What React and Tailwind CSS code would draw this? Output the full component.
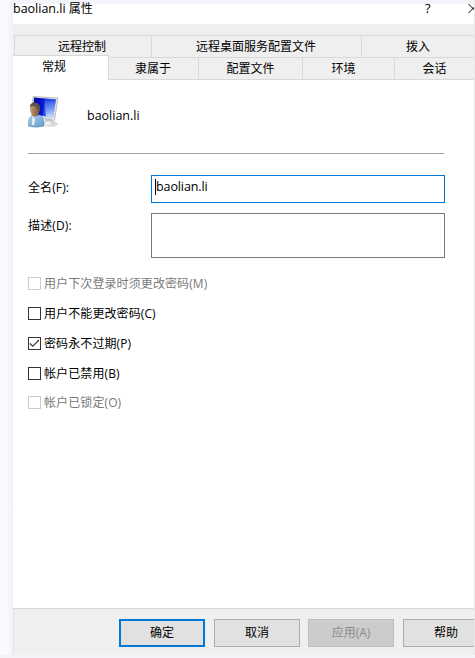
import React from 'react';

function Tab({ className, children }) {
  return <div className={`flex shrink-0 items-center justify-center border-[#d9d9d9] ${className}`}>{children}</div>;
}

function UserIcon() {
  return (
    <svg width="32" height="34" viewBox="0 0 32 34" className="block">
      <defs>
        <linearGradient id="screen" x1="0" y1="0" x2="1" y2="0.1">
          <stop offset="0" stopColor="#0004a0" />
          <stop offset="0.5" stopColor="#0a18d8" />
          <stop offset="0.54" stopColor="#2c55e6" />
          <stop offset="1" stopColor="#4f7cf0" />
        </linearGradient>
        <linearGradient id="glow" x1="0" y1="0" x2="0" y2="1">
          <stop offset="0" stopColor="#0a22d8" stopOpacity="0.8" />
          <stop offset="0.4" stopColor="#7ea6f6" stopOpacity="0.5" />
          <stop offset="1" stopColor="#eef5ff" stopOpacity="0.9" />
        </linearGradient>
        <linearGradient id="shirt" x1="0" y1="0" x2="1" y2="1">
          <stop offset="0" stopColor="#b0d3ee" />
          <stop offset="1" stopColor="#6298c9" />
        </linearGradient>
        <linearGradient id="face" x1="0" y1="0" x2="1" y2="0">
          <stop offset="0" stopColor="#c49a70" />
          <stop offset="1" stopColor="#7d5533" />
        </linearGradient>
      </defs>
      <ellipse cx="22.500" cy="29" rx="7.500" ry="3" fill="#dcdcdc" />
      <path d="M17 23L23 24L26 29L17 31Z" fill="#c3c5c7" />
      <path d="M16 27L22 26L25 29L17 31Z" fill="#eeeeee" />
      <path d="M5 1.500L30 3L26.500 25.500L4 21Z" fill="#e3e4e4" stroke="#b0b2b4" strokeWidth="0.8" />
      <path d="M6 2.500L28 4.500L25 23L5 19Z" fill="url(#screen)" />
      <path d="M16.500 3.500L28 4.500L25 23L18 21.500Z" fill="url(#glow)" />
      <path d="M0 31C0 24 2 21 5.500 20L11 20C15 21 16.500 25 16 31Q8 33.500 0 31Z" fill="url(#shirt)" stroke="#568ab4" strokeWidth="0.5" />
      <path d="M4.500 21L7 24L6 30L4 30Z" fill="#e9f4fa" />
      <path d="M3 16L9 18L10 20Q7 23 4 20Z" fill="#9a6c46" />
      <path d="M2 12Q2 8 6.500 8Q12 9 11.500 15Q11 21 6.500 21Q2 20 2 12Z" fill="url(#face)" />
      <path d="M2 12Q2 7.500 7 7.500Q13 8.500 12 15L10.500 18Q10 13 7.500 11.500Q4 10.500 2 12Z" fill="#59544c" />
    </svg>
  );
}

function Check({ label, checked, disabled, className = '' }) {
  return (
    <div className={`flex h-[30px] items-center ${disabled ? 'text-[#7a7a7a]' : 'text-black'} ${className}`}>
      <span className={`-mt-px mr-[3px] block size-[13px] shrink-0 border bg-white ${disabled ? 'border-[#cccccc]' : 'border-[#333333]'}`}>
        {checked && (
          <svg width="11" height="11" viewBox="0 0 11 11" className="block">
            <path d="M1 5.500L3.800 8.200L10 2" fill="none" stroke="#333" strokeWidth="1.1" />
          </svg>
        )}
      </span>
      <span className="tracking-[0.1px]">{label}</span>
    </div>
  );
}

function Button({ className, children }) {
  return <button className={`flex h-7 w-[86px] shrink-0 items-center justify-center ${className}`}>{children}</button>;
}

export default function App() {
  return (
    <div className="flex h-[658px] w-[475px] flex-col overflow-hidden bg-[#f3f4f9] font-['Open_Sans','Noto_Sans_CJK_SC',sans-serif] text-[12px] leading-[16px] whitespace-nowrap text-black">
      <div className="flex h-[655px] shrink-0">
        <div className="w-[13px] shrink-0 bg-linear-to-r from-[#fafbff] from-50% to-[#f0f0f5]" />
        <div className="flex w-[462px] shrink-0 flex-col overflow-x-clip border-r border-[#e8e8e8] bg-white">
          <header className="flex h-[24px] shrink-0 bg-linear-to-b from-[#f3f4f9] from-[4px] to-white to-[4px]">
            <div className="w-[410px] shrink-0 pt-px"><span className="text-[12.500px]">baolian.li</span> 属性</div>
            <div className="w-[45px] shrink-0 pl-[2px] text-[13px]">?</div>
            <svg width="10" height="14" viewBox="0 0 10 14" className="shrink-0">
              <path d="M0.500 4L9.500 13M9.500 4L0.500 13" stroke="#000" fill="none" />
            </svg>
          </header>
          <nav className="flex h-[56px] shrink-0 flex-col bg-[#efefef] pt-[11px]">
            <div className="flex h-[22px] shrink-0">
              <Tab className="ml-px w-[137px] border-t border-l pr-[2px]">远程控制</Tab>
              <Tab className="w-[210px] border-t border-l pr-px">远程桌面服务配置文件</Tab>
              <Tab className="w-[113px] border-t border-l">拨入</Tab>
            </div>
            <div className="flex h-[23px] shrink-0">
              <Tab className="-mt-[2px] h-[25px] w-[96px] border-t border-r bg-white pr-[13px] pb-[2px]">常规</Tab>
              <Tab className="w-[90px] border-y border-r pr-px">隶属于</Tab>
              <Tab className="w-[104px] border-y border-r">配置文件</Tab>
              <Tab className="w-[92px] border-y border-r pr-[10px]">环境</Tab>
              <Tab className="w-[79px] border-y">会话</Tab>
            </div>
          </nav>
          <main className="flex h-[528px] shrink-0 flex-col pl-[15px]">
            <div className="flex h-[74px] w-[416px] shrink-0 border-b border-[#a0a0a0] pt-[15px]">
              <UserIcon />
              <span className="mt-[13px] ml-[27px] text-[12.500px]">baolian.li</span>
            </div>
            <div className="mt-[21px] flex h-[28px] shrink-0">
              <span className="w-[123px] pt-[5px] tracking-[0.1px]">全名(F):</span>
              <div className="flex w-[294px] border border-[#0078d7] pt-[3px] pl-[3px]">
                <span className="h-[16px] w-px bg-black" />
                <span className="text-[12.500px] tracking-[-0.1px]">baolian.li</span>
              </div>
            </div>
            <div className="mt-[10px] flex h-[45px] shrink-0">
              <span className="w-[123px] pt-[5px] tracking-[0.15px]">描述(D):</span>
              <div className="w-[294px] border border-[#7a7a7a]" />
            </div>
            <div className="mt-[11px]">
              <Check label="用户下次登录时须更改密码(M)" disabled />
              <Check label="用户不能更改密码(C)" />
              <Check label="密码永不过期(P)" checked />
              <Check label="帐户已禁用(B)" />
              <Check label="帐户已锁定(O)" disabled className="-mt-px" />
            </div>
          </main>
          <footer className="flex h-[47px] shrink-0 gap-[9px] border-t border-l border-t-[#d9d9d9] border-l-[#e4e4e4] bg-[#efefef] pt-[10px] pl-[105px]">
            <Button className="border-2 border-[#0078d7] bg-[#e1e1e1]">确定</Button>
            <Button className="border border-[#adadad] bg-[#e1e1e1]">取消</Button>
            <Button className="-ml-px border border-[#bfbfbf] bg-[#cccccc] text-[#8b8b8b]">应用(A)</Button>
            <Button className="border border-[#adadad] bg-[#e1e1e1]">帮助</Button>
          </footer>
        </div>
      </div>
    </div>
  );
}
